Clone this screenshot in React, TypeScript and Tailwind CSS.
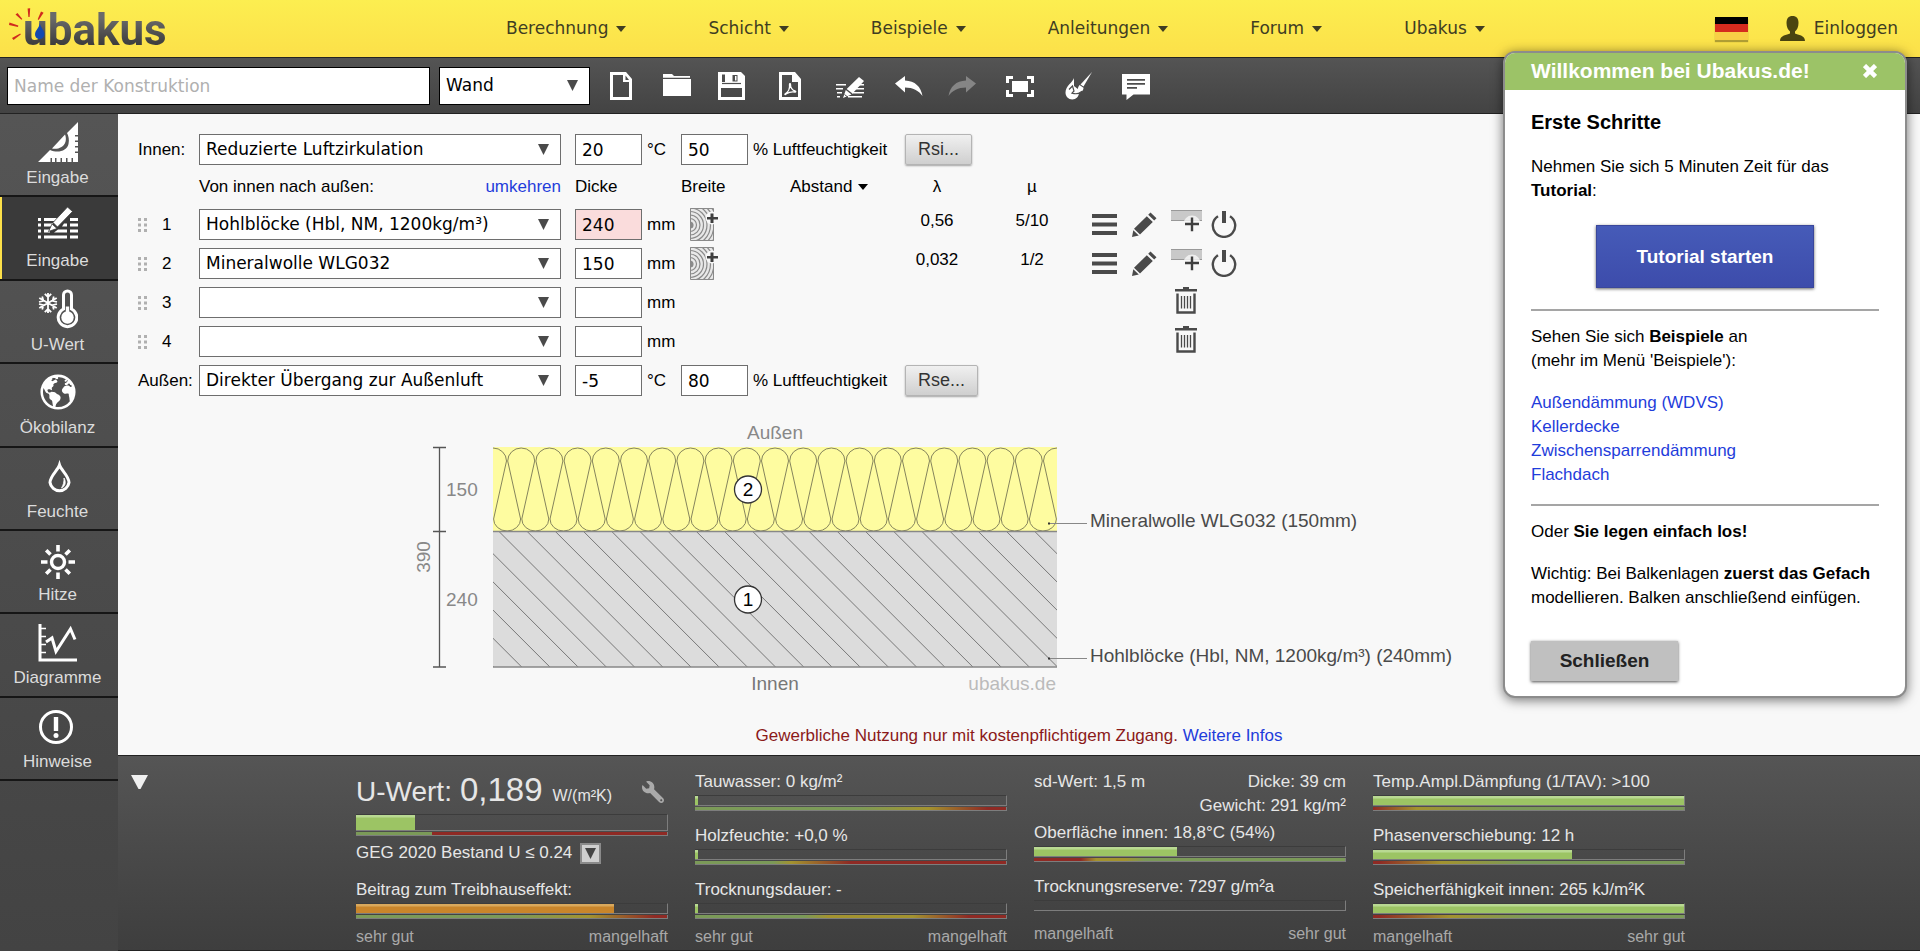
import { useState, type ReactNode } from "react";
import { FaWrench } from "react-icons/fa";
import { IoEarth } from "react-icons/io5";

const menu = ["Berechnung", "Schicht", "Beispiele", "Anleitungen", "Forum", "Ubakus"];

const layers = [
  { no: 1, material: "Hohlblöcke (Hbl, NM, 1200kg/m³)", dicke: "240", lambda: "0,56", mu: "5/10", warn: true },
  { no: 2, material: "Mineralwolle WLG032", dicke: "150", lambda: "0,032", mu: "1/2", warn: false },
  { no: 3, material: "", dicke: "", lambda: "", mu: "", warn: false },
  { no: 4, material: "", dicke: "", lambda: "", mu: "", warn: false },
];

const examples = ["Außendämmung (WDVS)", "Kellerdecke", "Zwischensparrendämmung", "Flachdach"];

/* ---------- small glyphs ---------- */

function Caret() {
  return (
    <svg viewBox="0 0 10 6" className="h-[6px] w-[10px]" fill="currentColor" aria-hidden="true">
      <path d="M0 0h10L5 6z" />
    </svg>
  );
}

function Triangle({ className = "" }: { className?: string }) {
  return (
    <svg viewBox="0 0 11 11" className={`h-[11px] w-[11px] ${className}`} fill="currentColor" aria-hidden="true">
      <path d="M0 0h11L5.5 11z" />
    </svg>
  );
}

/* ---------- logo ---------- */

function Logo() {
  return (
    <a href="/" className="relative block h-[57px] w-[160px] shrink-0">
      <span className="absolute left-[14px] top-0 bg-linear-to-b from-[#6a6a6a] from-30% to-[#333] to-85% bg-clip-text font-[Roboto,sans-serif] text-[44px] leading-[60px] font-bold text-transparent">
        ubakus
      </span>
      <svg viewBox="0 0 40 50" className="absolute left-0 top-0 h-[50px] w-[40px]" aria-hidden="true">
        <g fill="#d02a1e">
          <path d="M18.6 8.5l2.6-.2-.6 8.6h-1.2z" />
          <path d="M6.500 14.500l2-1.600 4.800 6.200-.9.700z" />
          <path d="M0 25l.5-2.500 8.800 3-.3 1.400z" />
          <path d="M3 38l8.200-4.600.6 1-7.300 5.700z" />
          <path d="M32 11.500l2.600 1.200-4.900 7.200-1-.7z" />
        </g>
        <path d="M30.800 23c.6 4.500 5 7.500 4.600 11.500-.4 3.200-2.600 4.700-5 4.600-2.800-.2-4.700-2.400-4.300-5.600.5-3.600 4.200-5.500 4.700-10.500z" fill="#1248b0" />
      </svg>
    </a>
  );
}

/* ---------- toolbar icons, all on a 28px grid ---------- */

function ToolSvg({ children }: { children: ReactNode }) {
  return (
    <svg viewBox="0 0 28 28" className="h-7 w-7" fill="currentColor" aria-hidden="true">
      {children}
    </svg>
  );
}

const pagePath = "M2 0h16l6 7v21H2zM5 3v22h16V10h-6V3z";

const toolGroups = [
  [
    {
      name: "Neu",
      icon: (
        <ToolSvg>
          <path fillRule="evenodd" d={pagePath} />
          <path d="M17.500 3.500V8H21z" fill="#4d4d4d" />
        </ToolSvg>
      ),
    },
    {
      name: "Öffnen",
      icon: (
        <ToolSvg>
          <path d="M0 2h9l2 2h16v1.800H0zM0 7h28v17H0z" />
        </ToolSvg>
      ),
    },
    {
      name: "Speichern",
      icon: (
        <ToolSvg>
          <path fillRule="evenodd" d="M0 0h23l4 4v24H0zM3 16v9h21v-9zM4 2.500v7.500h3V2.500z" />
          <path d="M14.500 3h5v6.500h-5z" fill="#4d4d4d" />
          <path d="M17 4h1.500v4.500H17z" />
          <path d="M4 11.500h19" stroke="#4d4d4d" strokeWidth="1.200" />
        </ToolSvg>
      ),
    },
  ],
  [
    {
      name: "PDF",
      icon: (
        <ToolSvg>
          <path fillRule="evenodd" d={pagePath} />
          <path
            d="M8 22c3-1.500 5-5.500 4.500-9.500 0-1 1-1 1 0-.3 3 2 6 4.700 6.500.9.300.6 1.200-.3 1-3.400-.6-6 .2-8.400 1.600-.8 1-2 1.300-1.500.4z"
            fill="none"
            stroke="currentColor"
            strokeWidth="1.300"
          />
        </ToolSvg>
      ),
    },
    {
      name: "Bearbeiten",
      icon: (
        <ToolSvg>
          <path d="M0 12h10v1.500H0zM0 16h7v1.500H0zM1 20h5v1.500H1zM1 24h3v1.500H1zM23 12h5v1.500h-5zM20 16h8v1.500h-8zM16 20h12v1.500H16zM12 24h14v1.500H12z" />
          <path d="M23 5l5 4-11.500 12.500-5.800-4.500zM9.800 18l5.700 4.500L7 26z" />
          <path d="M8.500 22.500l2.500 2" stroke="#4d4d4d" strokeWidth="1" />
        </ToolSvg>
      ),
    },
    {
      name: "Rückgängig",
      icon: (
        <ToolSvg>
          <path d="M0 11.500L10 4v4.500c10 .5 16 6 17.500 15.500C23.500 18.500 18 15.500 10 15.500v5z" />
        </ToolSvg>
      ),
    },
  ],
  [
    {
      name: "Wiederholen",
      icon: (
        <ToolSvg>
          <g fill="#858585">
            <path d="M28 11.500L18 4v4.500C8 9 2 14.500.5 24 4.500 18.500 10 15.500 18 15.500v5z" />
          </g>
        </ToolSvg>
      ),
    },
    {
      name: "Vollbild",
      icon: (
        <ToolSvg>
          <path d="M0 4h7v3H3v4H0zM21 4h7v7h-3V7h-4zM0 18h3v4h4v3H0zM25 18h3v7h-7v-3h4zM6 9h16v11H6z" />
        </ToolSvg>
      ),
    },
    {
      name: "Farben",
      icon: (
        <ToolSvg>
          <path d="M10 6c-1 4-8.500 8-8.500 14.500 0 4 3 7 6.800 7s6.700-3 6.700-7c0-1-.2-2-.6-3L10 14z" />
          <path d="M28 0l-8.500 14.500-3-2z" />
          <path d="M15.500 13l4 2.700c0 3.500-3 5.300-8 5.300 2.500-2 2-5.500 4-8z" />
          <path d="M5 17.500l3.500-3.500 1.500 5-2 2.200c4 1 8 .3 10-2" fill="none" stroke="#4d4d4d" strokeWidth="1.200" />
        </ToolSvg>
      ),
    },
    {
      name: "Kommentar",
      icon: (
        <ToolSvg>
          <path d="M0 2h28v20.500H11.500L4.500 28v-5.500H0z" />
          <path d="M5 7h18v1.800H5zM5 11h18v1.800H5zM5 15h10v1.800H5z" fill="#4d4d4d" />
        </ToolSvg>
      ),
    },
  ],
];

/* ---------- sidebar icons, 40px grid ---------- */

function SideSvg({ children }: { children: ReactNode }) {
  return (
    <svg viewBox="0 0 40 40" className="h-10 w-10" fill="currentColor" aria-hidden="true">
      {children}
    </svg>
  );
}

const sidebar = [
  {
    label: "Eingabe",
    active: false,
    icon: (
      <SideSvg>
        <path d="M40 0v13h-3v1.500h3v4h-3V20h3v4h-3v1.500h3v4h-3V31h3v9h-5v-4h-1.500v4h-4v-4H28v4h-4v-4h-1.500v4h-4v-4H17v4h-3v-4h-1.500v4H0l12-12c8 3.500 17 1 18.500-6 1-4.500 0-8-1.500-11z" />
        <path d="M14 26.500L27 12.500c2 5 .5 10-3.500 12.500-3 1.800-6.500 2.200-9.500 1.500z" />
      </SideSvg>
    ),
  },
  {
    label: "Eingabe",
    active: true,
    icon: (
      <SideSvg>
        <path d="M0 13h3v3H0zM0 18.500h3v3H0zM0 24.500h3v3H0zM0 30.500h3v3H0zM6 13h14v3H6zM6 18.500h9v3H6zM6 24.500h6v3H6zM6 30.500h23v3H6zM32 13h8v3h-8zM32 18.500h8v3h-8zM32 24.500h8v3h-8zM32 30.500h8v3h-8zM26 18.500h3v3h-5zM20 24.500h9v3H16z" />
        <path d="M29.500 2l5 4.500-15 15.500-4.500-4.500zM14 19l5 4.500-8.500 3z" stroke="#3b3b3b" strokeWidth=".8" />
      </SideSvg>
    ),
  },
  {
    label: "U-Wert",
    active: false,
    icon: (
      <SideSvg>
        <g fill="none" stroke="currentColor" strokeWidth="1.800">
          <path d="M10 4v20M1.300 9l17.400 10M18.700 9L1.300 19M6.800 4.800L10 8l3.200-3.200M6.800 23.200L10 20l3.200 3.200M1 13l4.400-1.200L4.200 7.400M19 15l-4.400 1.200 1.200 4.400M1 15l4.400 1.200-1.200 4.400M19 13l-4.400-1.200 1.200-4.400" />
        </g>
        <path
          d="M25.500 20V6a4 4 0 0 1 8 0v14a9.300 9.300 0 1 1-8 0z"
          fill="none"
          stroke="currentColor"
          strokeWidth="3"
        />
        <circle cx="29.500" cy="28.500" r="6.200" />
        <path d="M27.800 17.500h3.400v8h-3.400z" />
      </SideSvg>
    ),
  },
  { label: "Ökobilanz", active: false, icon: <IoEarth className="h-10 w-10" aria-hidden="true" /> },
  {
    label: "Feuchte",
    active: false,
    icon: (
      <SideSvg>
        <path
          d="M21.500 9c-1.500 5-9.500 11-9.500 17.500a9.600 9.600 0 0 0 19 0C31 20 23 14 21.500 9z"
          fill="none"
          stroke="currentColor"
          strokeWidth="3"
        />
        <path d="M26 22c2.500 4.500 1 8.500-2.500 10 1.800-3 2.700-6 2.500-10z" stroke="currentColor" strokeWidth=".8" />
      </SideSvg>
    ),
  },
  {
    label: "Hitze",
    active: false,
    icon: (
      <SideSvg>
        <circle cx="20" cy="23" r="6.500" fill="none" stroke="currentColor" strokeWidth="3.400" />
        <g stroke="currentColor" strokeWidth="3.600">
          <path d="M20 6v6.500M20 33.500V40M3 23h6.500M30.500 23H37M8.200 11.200l4.300 4.300M27.500 30.500l4.300 4.300M8.200 34.800l4.300-4.300M27.500 15.500l4.300-4.300" />
        </g>
      </SideSvg>
    ),
  },
  {
    label: "Diagramme",
    active: false,
    icon: (
      <SideSvg>
        <g fill="none" stroke="currentColor">
          <path d="M2 2v36h37" strokeWidth="3" />
          <path d="M3 6.500h5M3 14.500h5M3 22.500h5M3 30.500h5" strokeWidth="1.300" />
          <path d="M8 20l6-4 4 13.500L32.500 7 37 17.500" strokeWidth="3" />
        </g>
      </SideSvg>
    ),
  },
  {
    label: "Hinweise",
    active: false,
    icon: (
      <SideSvg>
        <circle cx="18" cy="21" r="15.500" fill="none" stroke="currentColor" strokeWidth="3" />
        <path d="M15.800 11h4.400v14h-4.400z" />
        <circle cx="18" cy="29.500" r="2.500" />
      </SideSvg>
    ),
  },
];

/* ---------- layer table icons ---------- */

function DragHandle() {
  return (
    <svg viewBox="0 0 9 14" className="h-[14px] w-[9px]" fill="#b0b0b0" aria-hidden="true">
      <path d="M0 0h3v3H0zM6 0h3v3H6zM0 5.500h3v3H0zM6 5.500h3v3H6zM0 11h3v3H0zM6 11h3v3H6z" />
    </svg>
  );
}

function WoodIcon() {
  return (
    <svg viewBox="0 0 28 33" className="h-[33px] w-7" aria-hidden="true">
      <defs>
        <clipPath id="wood">
          <path d="M0 0h24v33H0z" />
        </clipPath>
      </defs>
      <g clipPath="url(#wood)">
        <path d="M0 0h24v33H0z" fill="#e8e8e8" />
        <g fill="none" stroke="#8a8a8a" strokeWidth="1.200">
          <circle cx="0" cy="17" r="3" fill="#8a8a8a" />
          <circle cx="0" cy="17" r="6.500" />
          <circle cx="0" cy="17" r="10" />
          <circle cx="0" cy="17" r="13.500" />
          <circle cx="0" cy="17" r="17" />
          <circle cx="0" cy="17" r="20.500" />
          <circle cx="0" cy="17" r="24" />
          <circle cx="0" cy="17" r="27.500" />
          <path d="M.5.500h23v32H.5z" strokeWidth="1" />
        </g>
      </g>
      <circle cx="22" cy="10" r="6.500" fill="#f8f8f8" />
      <path d="M20.500 5.500h3V9H28v2.600h-4.500V15h-3v-3.400H17V9h3.500z" fill="#3f3f3f" />
    </svg>
  );
}

function MenuLines() {
  return (
    <svg viewBox="0 0 25 21" className="h-[21px] w-[25px]" fill="currentColor" aria-hidden="true">
      <path d="M0 0h25v4H0zM0 8.500h25v4H0zM0 17h25v4H0z" />
    </svg>
  );
}

function PencilIcon() {
  return (
    <svg viewBox="0 0 25 25" className="h-[25px] w-[25px]" fill="currentColor" aria-hidden="true">
      <path d="M18.500.5l6 5.800-2.300 2.300-6-5.800zM14.800 4.200l6 5.800L8 22.500l-6-5.700zM1.300 18.200l5.500 5.200L0 25z" />
    </svg>
  );
}

function InsertIcon() {
  return (
    <svg viewBox="0 0 31 22" className="h-[22px] w-[31px]" aria-hidden="true">
      <path d="M0 0h31v11H0z" fill="#c9c9c9" />
      <path d="M0 .5h31M0 10.500h31" stroke="#999" />
      <circle cx="21" cy="14" r="8.500" fill="#f8f8f8" fillOpacity=".8" />
      <path d="M19.800 7.500h2.400v5.300H28v2.400h-5.800v6h-2.400v-6H14v-2.400h5.800z" fill="#3f3f3f" />
    </svg>
  );
}

function PowerIcon() {
  return (
    <svg viewBox="0 0 26 27" className="h-[27px] w-[26px]" aria-hidden="true">
      <path d="M7 5.200a11.200 11.200 0 1 0 12 0" fill="none" stroke="currentColor" strokeWidth="2.400" />
      <path d="M11 0h4v12h-4z" fill="currentColor" />
    </svg>
  );
}

function TrashIcon() {
  return (
    <svg viewBox="0 0 22 27" className="h-[27px] w-[22px]" aria-hidden="true">
      <path d="M0 2h8V0h6v2h8v2.500H0z" fill="currentColor" />
      <path d="M2.500 6.500v19h17v-19" fill="none" stroke="currentColor" strokeWidth="2.400" />
      <path d="M6.500 9v12.500M9.500 9v12.500M12.500 9v12.500M15.500 9v12.500" stroke="currentColor" strokeWidth="1.300" />
    </svg>
  );
}

/* ---------- form controls ---------- */

const field = "h-[31px] border border-[#6e6e6e] bg-white pl-[6px] font-[DejaVu_Sans,sans-serif] text-[17px] text-black";

function MaterialSelect({ label, value, id }: { label: string; value: string; id: string }) {
  return (
    <div className="relative w-[362px]">
      <select id={id} aria-label={label} defaultValue={value} className={`${field} w-full appearance-none`}>
        <option value={value}>{value}</option>
      </select>
      <Triangle className="pointer-events-none absolute top-[10px] right-3 text-[#4a4a4a]" />
    </div>
  );
}

function ClimateRow(props: { id: string; label: string; surface: string; temp: string; humidity: string; button: string }) {
  return (
    <div className="flex h-[39px] items-center">
      <label htmlFor={props.id} className="w-[61px] whitespace-nowrap">
        {props.label}
      </label>
      <MaterialSelect id={props.id} label={props.label} value={props.surface} />
      <input aria-label={`Temperatur ${props.label}`} defaultValue={props.temp} className={`${field} ml-[14px] w-[67px]`} />
      <span className="ml-[5px] w-[34px]">°C</span>
      <input aria-label={`Luftfeuchtigkeit ${props.label}`} defaultValue={props.humidity} className={`${field} w-[67px]`} />
      <span className="ml-[5px] w-[152px]">% Luftfeuchtigkeit</span>
      <button
        type="button"
        className="h-[31px] rounded-xs border border-[#b4b4b4] bg-linear-to-b from-[#f0f0f0] to-[#cfcfcf] px-3 text-[18px] text-[#333] shadow-[0_1px_2px_rgba(0,0,0,0.35)]"
      >
        {props.button}
      </button>
    </div>
  );
}

function LayerTable() {
  return (
    <table className="w-[1112px] table-fixed border-collapse self-start text-left">
      <colgroup>
        <col className="w-[61px]" />
        <col className="w-[376px]" />
        <col className="w-[106px]" />
        <col className="w-[109px]" />
        <col className="w-[100px]" />
        <col className="w-[94px]" />
        <col className="w-[96px]" />
        <col className="w-[170px]" />
      </colgroup>
      <thead>
        <tr className="h-[36px]">
          <td />
          <th className="p-0 font-normal">
            <div className="flex w-[362px] justify-between">
              <span>Von innen nach außen:</span>
              <a href="#umkehren" className="text-[#1f3ddb]">
                umkehren
              </a>
            </div>
          </th>
          <th className="p-0 font-normal">Dicke</th>
          <th className="p-0 font-normal">Breite</th>
          <th className="p-0 font-normal">
            <button type="button" className="flex items-center gap-[6px]">
              Abstand <Caret />
            </button>
          </th>
          <th className="p-0 text-center font-normal">λ</th>
          <th className="p-0 text-center font-normal">µ</th>
          <td />
        </tr>
      </thead>
      <tbody>
        {layers.map((l) => (
          <tr key={l.no} className="h-[39px]">
            <td className="p-0">
              <div className="flex items-center gap-[15px]">
                <DragHandle />
                {l.no}
              </div>
            </td>
            <td className="p-0">
              <MaterialSelect id={`material${l.no}`} label={`Material Schicht ${l.no}`} value={l.material} />
            </td>
            <td className="p-0">
              <div className="flex items-center gap-[5px]">
                <input
                  aria-label={`Dicke Schicht ${l.no}`}
                  defaultValue={l.dicke}
                  className={`${field} w-[67px] ${l.warn ? "bg-[#fadcdc]!" : ""}`}
                />
                mm
              </div>
            </td>
            <td className="p-0 pl-[9px]">
              {l.material && (
                <button type="button" aria-label="Balken einfügen" className="block">
                  <WoodIcon />
                </button>
              )}
            </td>
            <td />
            <td className="p-0 pb-[7px] text-center">{l.lambda}</td>
            <td className="p-0 pb-[7px] text-center">{l.mu}</td>
            <td className="p-0 text-[#4a4a4a]">
              {l.material ? (
                <div className="flex items-center pl-3">
                  <button type="button" aria-label="Menü">
                    <MenuLines />
                  </button>
                  <button type="button" aria-label="Bearbeiten" className="ml-[15px]">
                    <PencilIcon />
                  </button>
                  <button type="button" aria-label="Schicht einfügen" className="ml-[14px] pb-2">
                    <InsertIcon />
                  </button>
                  <button type="button" aria-label="Ausschalten" className="ml-[9px]">
                    <PowerIcon />
                  </button>
                </div>
              ) : (
                <button type="button" aria-label="Schicht löschen" className="ml-[95px] block pb-1">
                  <TrashIcon />
                </button>
              )}
            </td>
          </tr>
        ))}
      </tbody>
    </table>
  );
}

/* ---------- cross section ---------- */

const PERIOD = 28.2;

function woolPath() {
  let d = "M-13.500 14A13.500 13 0 0 1 13.500 14";
  for (let i = 0; i < 20; i++) {
    const c = i * PERIOD;
    d += `L${c + 0.6} 72A13.500 12 0 0 0 ${c + 27.6} 72L${c + 14.7} 14A13.500 13 0 0 1 ${c + 41.7} 14`;
  }
  return d;
}

function CrossSection() {
  const hatch = [];
  for (let i = -5; i < 20; i++) hatch.push(6 + i * PERIOD);
  return (
    <svg
      viewBox="0 0 1050 280"
      className="mt-[21px] ml-[272px] h-[280px] w-[1050px] shrink-0 font-[Liberation_Sans,Arial,sans-serif] text-[19px]"
      role="img"
      aria-label="Schichtaufbau"
    >
      <defs>
        <clipPath id="wool">
          <path d="M0 0h564v84.500H0z" />
        </clipPath>
        <clipPath id="block">
          <path d="M0 0h564v135.500H0z" />
        </clipPath>
      </defs>
      <g transform="translate(83 26)" clipPath="url(#wool)">
        <path d="M0 0h564v85H0z" fill="#fefca0" />
        <path d={woolPath()} fill="none" stroke="#85845c" />
      </g>
      <g transform="translate(83 110.500)" clipPath="url(#block)">
        <path d="M0 0h564v136H0z" fill="#dcdcdc" />
        {hatch.map((x) => (
          <path key={x} d={`M${x} 0l136 136`} stroke="#777" />
        ))}
      </g>
      <path d="M83 110.500h564M83 246h564" stroke="#888" strokeWidth="1.500" />
      <path d="M29.500 26v220M23 26.500h13M23 110.500h13M23 246h13" stroke="#555" strokeWidth="1.300" fill="none" />
      <g fill="#888">
        <text x="365" y="18" textAnchor="middle">Außen</text>
        <text x="365" y="269" textAnchor="middle" fill="#777">Innen</text>
        <text x="36" y="75">150</text>
        <text x="36" y="185">240</text>
        <text transform="rotate(-90 14 136)" x="14" y="142" textAnchor="middle">390</text>
        <text x="646" y="269" textAnchor="end" fill="#bbb">ubakus.de</text>
      </g>
      <g fill="#fff" stroke="#333" strokeWidth="1.300">
        <circle cx="338" cy="68.500" r="13.500" />
        <circle cx="338" cy="178.500" r="13.500" />
      </g>
      <g fill="#000" textAnchor="middle">
        <text x="338" y="75">2</text>
        <text x="338" y="185">1</text>
      </g>
      <path d="M639 102.500h38M639 237.500h38" stroke="#888" />
      <path d="M638 101.500h2v2h-2zM638 236.500h2v2h-2z" fill="#333" />
      <g fill="#4a4a4a">
        <text x="680" y="106">Mineralwolle WLG032 (150mm)</text>
        <text x="680" y="241">Hohlblöcke (Hbl, NM, 1200kg/m³) (240mm)</text>
      </g>
    </svg>
  );
}

/* ---------- result panel ---------- */

function Bar({ value, scale, tall = false, color = "green" }: { value: number; scale?: string; tall?: boolean; color?: string }) {
  return (
    <div>
      <div className={`border-t border-r border-b border-t-[#3c3c3c] border-r-[#7d7d7d] border-b-[#7d7d7d] ${tall ? "h-[17px]" : "h-[11px]"}`}>
        <div
          className={`h-full ${
            color === "orange"
              ? "bg-[linear-gradient(#d9a85c_2px,#c9852b_3px)]"
              : "bg-[linear-gradient(#b9d992_2px,#9cc464_3px)]"
          }`}
          style={{ width: `${value}%` }}
        />
      </div>
      {scale && <div className={`mt-px h-1 border-r border-b border-[#7d7d7d] ${scale}`} />}
    </div>
  );
}

function Metric({ label, value, scale, color }: { label: string; value: number; scale?: string; color?: string }) {
  return (
    <div>
      <div className="mb-px leading-6 whitespace-nowrap">{label}</div>
      <Bar value={value} scale={scale} color={color} />
    </div>
  );
}

function Legend({ left, right }: { left: string; right: string }) {
  return (
    <div className="mt-[6px] flex justify-between text-base leading-6 text-[#a9a9a9]">
      <span>{left}</span>
      <span>{right}</span>
    </div>
  );
}

function ResultPanel() {
  return (
    <section className="flex border-t border-b border-t-[#222] border-b-[#222] bg-linear-to-b from-[#555] to-[#3e3e3e] pt-[14px] pb-px text-[17px] text-[#e6e6e6]">
      <div className="w-[238px] pl-[13px]">
        <button type="button" aria-label="Zuklappen" className="mt-[5px] block">
          <svg viewBox="0 0 17 14" className="h-[14px] w-[17px]" fill="#f0f0f0" aria-hidden="true">
            <path d="M0 0h17L9.500 14h-2z" />
          </svg>
        </button>
      </div>
      <div className="grid grid-cols-[repeat(4,312px)] gap-[27px]">
        <div>
          <div className="flex h-[44px] items-baseline text-[28px] leading-[40px]">
            U-Wert:
            <span className="ml-2 text-[33px]">0,189</span>
            <span className="ml-[10px] text-base">W/(m²K)</span>
            <button type="button" aria-label="Einstellungen" className="mr-1 ml-auto self-center">
              <FaWrench className="h-[22px] w-[22px] -scale-x-100 text-[#aaa]" />
            </button>
          </div>
          <Bar value={19} tall scale="bg-[linear-gradient(90deg,#7b9a58_24.5%,#8f2a24_24.5%)]" />
          <div className="mt-[5px] mb-[13px] flex h-[24px] items-center gap-2">
            GEG 2020 Bestand U ≤ 0.24
            <button
              type="button"
              aria-label="Anforderung wählen"
              className="flex h-[21px] w-[21px] items-center justify-center border-2 border-[#8a8a8a] bg-[#cfcfcf] text-[#444]"
            >
              <Triangle />
            </button>
          </div>
          <Metric
            label="Beitrag zum Treibhauseffekt:"
            value={83}
            color="orange"
            scale="bg-[linear-gradient(90deg,#7b9a58_50%,#a3932f_75%,#8f2a24_96%)]"
          />
          <Legend left="sehr gut" right="mangelhaft" />
        </div>
        <div>
          <div className="space-y-[13px]">
            <Metric label="Tauwasser: 0 kg/m²" value={1} scale="bg-[linear-gradient(90deg,#7b9a58_52%,#a3932f_75%,#8f2a24_94%)]" />
            <Metric label="Holzfeuchte: +0,0 %" value={1} scale="bg-[linear-gradient(90deg,#7b9a58_25%,#a3932f_31%,#8f2a24_50%)]" />
            <Metric
              label="Trocknungsdauer: -"
              value={1}
              scale="bg-[linear-gradient(90deg,#7b9a58_35%,#a3932f_43%,#a3932f_70%,#8f2a24_88%)]"
            />
          </div>
          <Legend left="sehr gut" right="mangelhaft" />
        </div>
        <div>
          <div className="flex justify-between leading-6">
            <span>sd-Wert: 1,5 m</span>
            <span>Dicke: 39 cm</span>
          </div>
          <div className="mb-[3px] text-right leading-6">Gewicht: 291 kg/m²</div>
          <div className="space-y-[13px]">
            <Metric
              label="Oberfläche innen: 18,8°C (54%)"
              value={46}
              scale="bg-[linear-gradient(90deg,#8f2a24_15%,#a3932f_20%,#a3932f_29%,#7b9a58_36%)]"
            />
            <Metric label="Trocknungsreserve: 7297 g/m²a" value={0} />
          </div>
          <div className="pt-[5px]">
            <Legend left="mangelhaft" right="sehr gut" />
          </div>
        </div>
        <div>
          <div className="space-y-[13px]">
            <Metric label="Temp.Ampl.Dämpfung (1/TAV): >100" value={100} scale="bg-[linear-gradient(90deg,#8f2a24,#a3932f_14%,#7b9a58_42%)]" />
            <Metric label="Phasenverschiebung: 12 h" value={64} scale="bg-[linear-gradient(90deg,#8f2a24_2%,#a3932f_22%,#7b9a58_48%)]" />
            <Metric label="Speicherfähigkeit innen: 265 kJ/m²K" value={100} scale="bg-[linear-gradient(90deg,#8f2a24_2%,#a3932f_25%,#7b9a58_50%)]" />
          </div>
          <Legend left="mangelhaft" right="sehr gut" />
        </div>
      </div>
    </section>
  );
}

/* ---------- welcome dialog ---------- */

function Welcome({ onClose }: { onClose: () => void }) {
  return (
    <div
      role="dialog"
      aria-labelledby="welcome-title"
      className="absolute top-[51px] right-[13px] w-[404px] overflow-hidden rounded-xl border-2 border-[#8c8c8c] bg-white text-[17px] leading-6 text-black shadow-[0_2px_12px_rgba(0,0,0,0.55)]"
    >
      <div className="flex h-[37px] items-center justify-between bg-[#9cc367] pr-7 pb-px pl-[26px] text-white">
        <h2 id="welcome-title" className="text-[21px] font-bold">
          Willkommen bei Ubakus.de!
        </h2>
        <button type="button" aria-label="Fenster schließen" onClick={onClose}>
          <svg viewBox="0 0 14 14" className="h-[14px] w-[14px]" stroke="currentColor" strokeWidth="4.500" aria-hidden="true">
            <path d="M1.500 1.500l11 11M12.500 1.500l-11 11" />
          </svg>
        </button>
      </div>
      <div className="px-[26px] pt-5 pb-[15px]">
        <h3 className="text-[20px] font-bold">Erste Schritte</h3>
        <p className="mt-[21px]">
          Nehmen Sie sich 5 Minuten Zeit für das <b>Tutorial</b>:
        </p>
        <button
          type="button"
          className="mx-auto mt-[22px] block h-[63px] w-[218px] border border-[#3a479b] bg-linear-to-b from-[#465bb8] to-[#3d4cab] text-[19px] font-bold text-white shadow-[0_1px_3px_rgba(0,0,0,0.6)]"
        >
          Tutorial starten
        </button>
        <hr className="mt-[21px] border-t-2 border-[#a5a5a5]" />
        <p className="mt-[14px]">
          Sehen Sie sich <b>Beispiele</b> an
          <br />
          (mehr im Menü 'Beispiele'):
        </p>
        <ul className="mt-[18px]">
          {examples.map((e) => (
            <li key={e}>
              <a href="#beispiel" className="text-[#1f3ddb]">
                {e}
              </a>
            </li>
          ))}
        </ul>
        <hr className="mt-[17px] border-t-2 border-[#a5a5a5]" />
        <p className="mt-[14px]">
          Oder <b>Sie legen einfach los!</b>
        </p>
        <p className="mt-[18px]">
          Wichtig: Bei Balkenlagen <b>zuerst das Gefach</b> modellieren. Balken anschließend einfügen.
        </p>
        <button
          type="button"
          onClick={onClose}
          className="mt-[31px] block h-[40px] w-[147px] bg-[#c0c0c0] text-[19px] font-bold text-[#222] shadow-[0_1px_3px_rgba(0,0,0,0.7)]"
        >
          Schließen
        </button>
      </div>
    </div>
  );
}

export default function App() {
  const [showWelcome, setShowWelcome] = useState(true);

  return (
    <div className="relative flex min-h-screen flex-col bg-[#f8f8f8] font-[Liberation_Sans,Arial,sans-serif] text-[17px] text-black">
      <header className="flex h-[58px] items-center border-b border-[#222] bg-linear-to-b from-[#fcee50] to-[#fce049] pr-[22px] pl-[9px] font-[DejaVu_Sans,sans-serif] text-[#3f3d22]">
        <Logo />
        <nav className="ml-[337px] flex gap-[82px] pt-px">
          {menu.map((m) => (
            <button key={m} type="button" className="flex items-center gap-2">
              {m} <Caret />
            </button>
          ))}
        </nav>
        <div className="ml-auto flex items-center">
          <button type="button" aria-label="Sprache: Deutsch" className="block h-[23px] w-[33px] shadow-[0_2px_1px_rgba(0,0,0,0.3)]">
            <span className="block h-[7px] bg-black" />
            <span className="block h-2 bg-[#d52b1e]" />
            <span className="block h-2 bg-[#f8cf46]" />
          </button>
          <a href="#login" className="ml-8 flex items-center gap-[9px]">
            <svg viewBox="0 0 25 25" className="h-[25px] w-[25px]" fill="#4a4410" aria-hidden="true">
              <path d="M12.500 0c4 0 6 2.500 6 7 0 4-1.500 7-3.500 8.500v2c3 1.500 10 1.500 10 7.500H0c0-6 7-6 10-7.500v-2C8 14 6.500 11 6.500 7c0-4.500 2-7 6-7z" />
            </svg>
            Einloggen
          </a>
        </div>
      </header>

      <div className="flex h-[56px] items-center border-b border-[#222] bg-linear-to-b from-[#545454] to-[#434343] pl-[7px] text-white">
        <input
          aria-label="Name der Konstruktion"
          placeholder="Name der Konstruktion"
          className="h-[38px] w-[423px] border border-black bg-white pl-[6px] font-[DejaVu_Sans,sans-serif] text-black placeholder:text-[#b0b0b0]"
        />
        <div className="relative ml-[9px] w-[151px] text-black">
          <select
            aria-label="Bauteil"
            defaultValue="Wand"
            className="h-[38px] w-full appearance-none border border-black bg-white pl-[6px] font-[DejaVu_Sans,sans-serif]"
          >
            <option>Wand</option>
            <option>Dach</option>
            <option>Decke</option>
          </select>
          <Triangle className="pointer-events-none absolute top-[13px] right-3 text-[#4a4a4a]" />
        </div>
        <div className="ml-[18px] flex items-center">
          <div className="flex gap-[27px]">
            {toolGroups[0].map((t) => (
              <button key={t.name} type="button" aria-label={t.name}>
                {t.icon}
              </button>
            ))}
          </div>
          <div className="ml-[31px] flex gap-[31px]">
            {toolGroups[1].map((t) => (
              <button key={t.name} type="button" aria-label={t.name}>
                {t.icon}
              </button>
            ))}
          </div>
          <div className="ml-[25px] flex gap-[30px]">
            {toolGroups[2].map((t) => (
              <button key={t.name} type="button" aria-label={t.name}>
                {t.icon}
              </button>
            ))}
          </div>
        </div>
      </div>

      <div className="flex flex-1">
        <aside className="w-[118px] shrink-0 bg-linear-to-b from-[#555] to-[#434343]">
          <nav className="grid h-[667px] auto-rows-fr">
            {sidebar.map((s, i) => (
              <a
                key={i}
                href="#ansicht"
                className={`flex flex-col items-center border-b-2 border-[#161616] pt-2 pr-[3px] text-[#dcdcdc] ${
                  s.active ? "bg-[#3a3a3a] shadow-[inset_2px_0_0_#fce049]" : ""
                }`}
              >
                <span className="text-white">{s.icon}</span>
                <span className="mt-1 leading-6">{s.label}</span>
              </a>
            ))}
          </nav>
        </aside>

        <div className="flex min-w-0 flex-1 flex-col">
          <main className="flex flex-1 flex-col pt-4 pb-[7px] pl-5">
            <ClimateRow id="innen" label="Innen:" surface="Reduzierte Luftzirkulation" temp="20" humidity="50" button="Rsi..." />
            <LayerTable />
            <ClimateRow id="aussen" label="Außen:" surface="Direkter Übergang zur Außenluft" temp="-5" humidity="80" button="Rse..." />
            <CrossSection />
            <p className="mt-auto pr-5 text-center leading-6 text-[#8b1a1a]">
              Gewerbliche Nutzung nur mit kostenpflichtigem Zugang.{" "}
              <a href="#infos" className="text-[#1f3ddb]">
                Weitere Infos
              </a>
            </p>
          </main>
          <ResultPanel />
        </div>
      </div>

      {showWelcome && <Welcome onClose={() => setShowWelcome(false)} />}
    </div>
  );
}
